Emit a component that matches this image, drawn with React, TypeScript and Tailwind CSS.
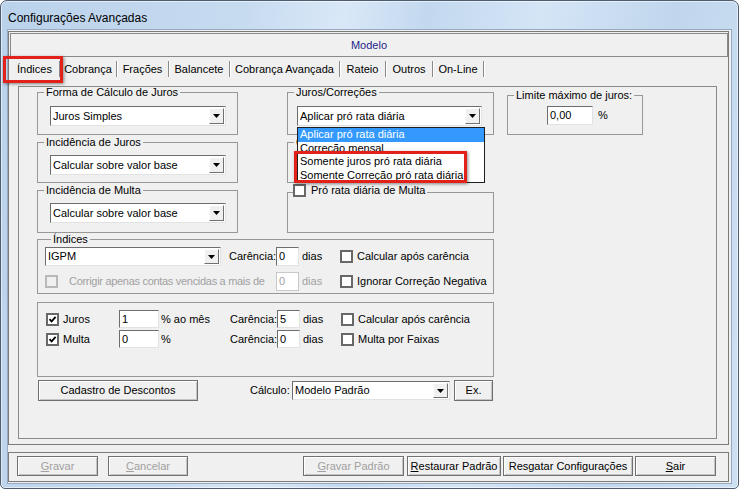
import type { ReactNode } from 'react';

// Janela "Configurações Avançadas" — estilo Windows 7 / Delphi

const TABS = [
  { label: 'Índices', w: 'w-[50px]' },
  { label: 'Cobrança', w: 'w-[57px]' },
  { label: 'Frações', w: 'w-[52px]' },
  { label: 'Balancete', w: 'w-[61px]' },
  { label: 'Cobrança Avançada', w: 'w-[110px]' },
  { label: 'Rateio', w: 'w-[46px]' },
  { label: 'Outros', w: 'w-[47px]' },
  { label: 'On-Line', w: 'w-[51px]' },
];

const LIST = ['Aplicar pró rata diária', 'Correção mensal', 'Somente juros pró rata diária', 'Somente Correção pró rata diária'];

function Arrow() {
  return (
    <svg width="7" height="4" viewBox="0 0 7 4">
      <path d="M0 0H7L3.5 4Z" fill="#000" />
    </svg>
  );
}

function Combo({ value, className }: { value: string; className: string }) {
  return (
    <div className={`flex bg-white border border-t-[#6d6d6d] border-l-[#6d6d6d] border-b-[#e2e2e2] border-r-[#e2e2e2] ${className}`}>
      <span className="flex-1 flex items-center pl-[2px] overflow-hidden">{value}</span>
      <span className="w-[15px] my-[1px] mr-[1px] flex items-center justify-center bg-[#f0f0f0] border border-t-white border-l-white border-b-[#707070] border-r-[#707070]">
        <Arrow />
      </span>
    </div>
  );
}

function Field({ value, className, disabled }: { value: string; className: string; disabled?: boolean }) {
  return (
    <div
      className={`flex items-center pl-[2px] bg-white border ${
        disabled ? 'border-[#c8c8c8] text-[#a0a0a0]' : 'border-t-[#6d6d6d] border-l-[#6d6d6d] border-b-[#e2e2e2] border-r-[#e2e2e2]'
      } ${className}`}
    >
      {value}
    </div>
  );
}

function Check({ checked, disabled }: { checked?: boolean; disabled?: boolean }) {
  return (
    <span
      className={`w-[13px] h-[13px] shrink-0 flex items-center justify-center border-2 ${
        disabled ? 'border-[#b9b9b9] bg-[#f0f0f0]' : 'border-[#686868] bg-white'
      }`}
    >
      {checked && (
        <svg width="9" height="9" viewBox="0 0 9 9">
          <path d="M1.5 4.2L3.6 6.4L7.6 1.8" fill="none" stroke="#000" strokeWidth="1.8" />
        </svg>
      )}
    </span>
  );
}

function Group({ label, className, children }: { label?: ReactNode; className: string; children?: ReactNode }) {
  return (
    <fieldset className={`border border-[#979797] px-0 min-w-0 ${className}`}>
      {label && <legend className="ml-[6px] px-[2px] leading-[11px]">{label}</legend>}
      {children}
    </fieldset>
  );
}

function Btn({ children, className }: { children: ReactNode; className: string }) {
  return (
    <div
      className={`flex items-center justify-center bg-[#f0f0f0] border border-[#707070] shadow-[inset_1px_1px_0_#fff,inset_-1px_-1px_0_#c4c4c4] ${className}`}
    >
      {children}
    </div>
  );
}

export default function App() {
  return (
    <div className="relative w-[740px] h-[490px] bg-white font-['Liberation_Sans',Arial,sans-serif] text-[11px] leading-[13px] text-black whitespace-nowrap overflow-hidden">
      {/* Janela */}
      <div className="w-[739px] h-[489px] flex flex-col rounded-t-[7px] rounded-b-[5px] border border-[#4e5d70] bg-[linear-gradient(100deg,#bad2eb_0%,#c7dbf0_30%,#d9e8f7_42%,#c3d8ef_52%,#d4e5f6_66%,#c1d6ed_82%,#cde0f3_100%)] px-[7px] pb-[5px] shadow-[inset_0_0_0_1px_rgba(255,255,255,0.55)]">
        <div className="h-[29px] flex items-center pt-[5px] text-[12px]">Configurações Avançadas</div>

        {/* Área cliente */}
        <div className="flex-1 flex flex-col bg-[#f0f0f0] pt-[1px] pb-[1px] pr-[2px] outline outline-[#97aac1]">
          {/* Painel principal */}
          <div className="h-[414px] border border-[#7b7b7b] flex flex-col">
            <div className="mt-[1px] ml-[1px] h-[24px] border border-[#8a8a8a] flex items-center justify-center text-[#24248c]">
              Modelo
            </div>

            {/* Abas */}
            <div className="h-[24px] flex items-center pl-[1px]">
              {TABS.map((t) => (
                <div key={t.label} className={`h-[16px] flex items-center justify-center border-r border-[#8a8a8a] shadow-[1px_0_0_#fff] ${t.w}`}>
                  {t.label}
                </div>
              ))}
            </div>

            {/* Folha da aba Índices */}
            <div className="mt-[5px] ml-[9px] w-[699px] h-[353px] border border-[#8a8a8a] pl-[18px]">
              <div className="flex">
                {/* Coluna esquerda */}
                <div className="w-[201px] flex flex-col">
                  <Group label="Forma de Cálculo de Juros" className="h-[48px] pt-[8px]">
                    <Combo value="Juros Simples" className="ml-[12px] w-[176px] h-[20px]" />
                  </Group>
                  <Group label="Incidência de Juros" className="mt-[2px] h-[46px] pt-[7px]">
                    <Combo value="Calcular sobre valor base" className="ml-[12px] w-[176px] h-[20px]" />
                  </Group>
                  <Group label="Incidência de Multa" className="mt-[2px] h-[48px] pt-[7px]">
                    <Combo value="Calcular sobre valor base" className="ml-[12px] w-[176px] h-[20px]" />
                  </Group>
                </div>

                {/* Coluna do meio */}
                <div className="ml-[49px] w-[207px] flex flex-col">
                  <Group label="Juros/Correções" className="h-[48px] pt-[8px]">
                    <div className="relative ml-[9px] w-[185px]">
                      <Combo value="Aplicar pró rata diária" className="w-[185px] h-[20px]" />
                      <div className="absolute z-10 top-[21px] left-0 w-[188px] h-[56px] bg-white border border-[#1e1e1e] flex flex-col">
                        {LIST.map((item, i) => (
                          <div key={item} className={`h-[13.5px] flex items-center pl-[2px] ${i === 0 ? 'bg-[#3399ff] text-white' : ''}`}>
                            {item}
                          </div>
                        ))}
                      </div>
                    </div>
                  </Group>
                  {/* grupo encoberto pela lista aberta */}
                  <Group label="C" className="mt-[2px] w-[198px] h-[46px]" />
                  <fieldset className="mt-[1px] h-[49px] border border-[#979797] px-0 min-w-0">
                    <legend className="ml-[5px] pr-[2px] leading-[13px]">
                      <span className="inline-flex items-center gap-[5px]">
                        <Check />
                        Pró rata diária de Multa
                      </span>
                    </legend>
                  </fieldset>
                </div>

                {/* Coluna direita */}
                <div className="ml-[13px] w-[136px]">
                  <Group label="Limite máximo de juros:" className="mt-[3px] h-[45px] pt-[5px]">
                    <div className="flex items-center pl-[39px]">
                      <Field value="0,00" className="w-[46px] h-[19px]" />
                      <span className="ml-[5px]">%</span>
                    </div>
                  </Group>
                </div>
              </div>

              {/* Índices */}
              <Group label="Índices" className="mt-[1px] w-[457px] h-[60px] pt-[2px] pl-[7px]">
                <div className="h-[19px] flex items-center">
                  <Combo value="IGPM" className="w-[176px] h-[19px]" />
                  <span className="ml-[8px] w-[47px]">Carência:</span>
                  <Field value="0" className="w-[23px] h-[19px]" />
                  <span className="w-[41px] pl-[3px]">dias</span>
                  <Check />
                  <span className="ml-[4px]">Calcular após carência</span>
                </div>
                <div className="mt-[6px] h-[19px] flex items-center">
                  <Check disabled />
                  <span className="ml-[11px] w-[207px] tracking-[-0.3px] text-[#a0a0a0]">Corrigir apenas contas vencidas a mais de</span>
                  <Field value="0" className="w-[23px] h-[19px]" disabled />
                  <span className="w-[41px] pl-[3px] text-[#a0a0a0]">dias</span>
                  <Check />
                  <span className="ml-[4px]">Ignorar Correção Negativa</span>
                </div>
              </Group>

              {/* Juros e multa */}
              <div className="mt-[8px] w-[457px] h-[75px] border border-[#979797] pt-[7px] pl-[8px]">
                <div className="h-[18px] flex items-center">
                  <Check checked />
                  <span className="ml-[4px] w-[56px]">Juros</span>
                  <Field value="1" className="w-[40px] h-[18px]" />
                  <span className="w-[71px] pl-[2px]">% ao mês</span>
                  <span className="w-[47px]">Carência:</span>
                  <Field value="5" className="w-[23px] h-[18px]" />
                  <span className="w-[41px] pl-[3px]">dias</span>
                  <Check />
                  <span className="ml-[4px]">Calcular após carência</span>
                </div>
                <div className="mt-[2px] h-[18px] flex items-center">
                  <Check checked />
                  <span className="ml-[4px] w-[56px]">Multa</span>
                  <Field value="0" className="w-[40px] h-[18px]" />
                  <span className="w-[71px] pl-[2px]">%</span>
                  <span className="w-[47px]">Carência:</span>
                  <Field value="0" className="w-[23px] h-[18px]" />
                  <span className="w-[41px] pl-[3px]">dias</span>
                  <Check />
                  <span className="ml-[4px]">Multa por Faixas</span>
                </div>
              </div>

              {/* Linha inferior */}
              <div className="mt-[3px] h-[21px] flex items-center">
                <Btn className="ml-[1px] w-[160px] h-[21px]">Cadastro de Descontos</Btn>
                <span className="ml-[52px] w-[42px]">Cálculo:</span>
                <Combo value="Modelo Padrão" className="w-[158px] h-[19px]" />
                <Btn className="ml-[4px] w-[39px] h-[21px]">Ex.</Btn>
              </div>
            </div>
          </div>

          {/* Botões */}
          <div className="mt-[7px] h-[30px] border border-[#7b7b7b] flex pt-[3px] pl-[8px]">
            <Btn className="w-[81px] h-[20px] text-[#a0a0a0]">
              <span><u>G</u>ravar</span>
            </Btn>
            <Btn className="ml-[10px] w-[80px] h-[20px] text-[#a0a0a0]">
              <span><u>C</u>ancelar</span>
            </Btn>
            <Btn className="ml-[115px] w-[101px] h-[20px] text-[#a0a0a0]">
              <span><u>G</u>ravar Padrão</span>
            </Btn>
            <Btn className="ml-[3px] w-[94px] h-[20px]">
              <span><u>R</u>estaurar Padrão</span>
            </Btn>
            <Btn className="ml-[2px] w-[130px] h-[20px]">Resgatar Configurações</Btn>
            <Btn className="ml-[2px] w-[81px] h-[20px]">
              <span><u>S</u>air</span>
            </Btn>
          </div>
        </div>
      </div>

      {/* Destaques em vermelho */}
      <div className="absolute z-20 left-[3px] top-[56px] w-[60px] h-[27px] border-[3px] border-[#e3211b] shadow-[1px_1px_3px_rgba(0,0,0,0.45)]" />
      <div className="absolute z-20 left-[294px] top-[151px] w-[173px] h-[32px] border-[3px] border-[#e3211b] shadow-[1px_1px_3px_rgba(0,0,0,0.45)]" />
    </div>
  );
}
